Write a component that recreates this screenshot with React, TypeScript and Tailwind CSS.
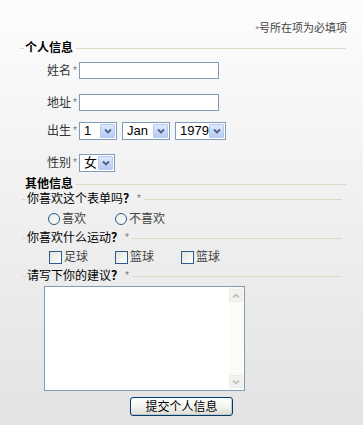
import type { ReactNode } from 'react';

const Star = () => <span className="ml-[2px] text-[10px] leading-none text-[#7a7a7a]">*</span>;

function Legend({ children, tick = true, end = 'mr-[17px]' }: { children: ReactNode; tick?: boolean; end?: string }) {
  return (
    <div className={`flex h-[12px] items-center ${end}`}>
      {tick ? <span className="mr-[1px] h-px w-[4px] bg-[#d9dcc6]" /> : null}
      {children}
      <span className="ml-[3px] h-px flex-1 bg-[#d9dcc6]" />
    </div>
  );
}

function Chevron({ up = false, color }: { up?: boolean; color: string }) {
  return (
    <svg width="8" height="6" viewBox="0 0 8 6" className={up ? 'rotate-180' : ''}>
      <path d="M1 1.5 L4 4.5 L7 1.5" fill="none" stroke={color} strokeWidth="1.8" />
    </svg>
  );
}

function Combo({ value, width }: { value: string; width: string }) {
  return (
    <div className={`flex h-[18px] ${width} items-stretch border border-[#7f9db9] bg-white p-[1px]`}>
      <span className="flex-1 pl-[3px] text-[13px] leading-[14px] text-black">{value}</span>
      <span className="flex w-[15px] items-center justify-center rounded-[1px] border border-[#b5c8f2] bg-gradient-to-b from-[#dfe8fd] to-[#b7caf3]">
        <Chevron color="#4d6185" />
      </span>
    </div>
  );
}

function Field({ label, children, className }: { label: string; children: ReactNode; className: string }) {
  return (
    <div className={`flex items-center ${className}`}>
      <div className="flex w-[59px] items-center justify-end pr-[2px] text-[12px] text-[#333]">
        {label}
        <Star />
      </div>
      {children}
    </div>
  );
}

function Radio({ label }: { label: string }) {
  return (
    <label className="flex items-center gap-[2px]">
      <span className="h-[12px] w-[12px] rounded-full border border-[#2c5b8c] bg-gradient-to-br from-[#e8e8e2] to-white" />
      <span>{label}</span>
    </label>
  );
}

function Check({ label }: { label: string }) {
  return (
    <label className="flex items-center gap-[2px]">
      <span className="h-[13px] w-[13px] border border-[#2c5b8c] bg-gradient-to-br from-[#e2e2dc] to-white" />
      <span>{label}</span>
    </label>
  );
}

export default function App() {
  return (
    <div className="h-[425px] w-[363px] overflow-hidden bg-gradient-to-b from-[#fdfdfd] to-[#e3e3e3] font-['Liberation_Sans','Noto_Sans_CJK_SC',sans-serif] text-[12px] text-[#222]">
      <div className="pl-[20px]">
        {/* top note */}
        <div className="mt-[20px] h-[16px] pr-[16px] text-right text-[11px] leading-[16px] text-[#444]">
          <span className="text-[9px] text-[#777]">*</span>号所在项为必填项
        </div>

        {/* personal info */}
        <div className="mt-[6px]">
          <Legend>
            <span className="text-[12px] font-bold text-black">个人信息</span>
          </Legend>
        </div>
        <Field label="姓名" className="mt-[8px] h-[17px]">
          <input className="h-[17px] w-[140px] border border-[#7f9db9] bg-white" />
        </Field>
        <Field label="地址" className="mt-[15px] h-[17px]">
          <input className="h-[17px] w-[140px] border border-[#7f9db9] bg-white" />
        </Field>
        <Field label="出生" className="mt-[11px] h-[18px]">
          <div className="flex gap-[5px]">
            <Combo value="1" width="w-[38px]" />
            <Combo value="Jan" width="w-[48px]" />
            <Combo value="1979" width="w-[51px]" />
          </div>
        </Field>
        <Field label="性别" className="mt-[14px] h-[18px]">
          <Combo value="女" width="w-[36px]" />
        </Field>

        {/* other info */}
        <div className="mt-[6px]">
          <Legend tick={false} end="mr-[17px]">
            <span className="pl-[5px] text-[12px] font-bold text-black">其他信息</span>
          </Legend>
        </div>
        <div className="mt-[3px] h-[14px] pl-[2px]">
          <Legend end="mr-[21px]">
            <span className="flex h-[14px] items-center text-[12px] text-black">
              你喜欢这个表单吗<b>？</b>
              <Star />
            </span>
          </Legend>
        </div>
        <div className="mt-[5px] flex h-[14px] items-center gap-[29px] pl-[28px] text-[12px] text-[#444]">
          <Radio label="喜欢" />
          <Radio label="不喜欢" />
        </div>
        <div className="mt-[6px] h-[14px] pl-[2px]">
          <Legend end="mr-[21px]">
            <span className="flex h-[14px] items-center text-[12px] text-black">
              你喜欢什么运动<b>？</b>
              <Star />
            </span>
          </Legend>
        </div>
        <div className="mt-[4px] flex h-[14px] items-center gap-[27px] pl-[29px] text-[12px] text-[#444]">
          <Check label="足球" />
          <Check label="篮球" />
          <Check label="篮球" />
        </div>
        <div className="mt-[6px] h-[14px] pl-[2px]">
          <Legend end="mr-[21px]">
            <span className="flex h-[14px] items-center text-[12px] text-black">
              请写下你的建议<b>？</b>
              <Star />
            </span>
          </Legend>
        </div>

        {/* textarea */}
        <div className="ml-[24px] mt-[2px] flex h-[105px] w-[201px] border border-[#7f9db9] bg-white">
          <div className="flex-1" />
          <div className="flex w-[15px] flex-col justify-between bg-[#fbfbf7] py-[2px] pr-[1px]">
            <span className="flex h-[13px] items-center justify-center rounded-[2px] border border-[#ebebe4] bg-[#f2f2ee]">
              <Chevron up color="#c4c4bd" />
            </span>
            <span className="flex h-[13px] items-center justify-center rounded-[2px] border border-[#ebebe4] bg-[#f2f2ee]">
              <Chevron color="#c4c4bd" />
            </span>
          </div>
        </div>

        {/* submit */}
        <div className="ml-[110px] mt-[6px]">
          <button className="flex h-[19px] w-[103px] items-center justify-center rounded-[3px] border border-[#003c74] bg-gradient-to-b from-white via-[#f4f4f0] to-[#dcdcd4] text-[12px] text-black shadow-[inset_-1px_-1px_0_#c9c9c0]">
            提交个人信息
          </button>
        </div>
      </div>
    </div>
  );
}
